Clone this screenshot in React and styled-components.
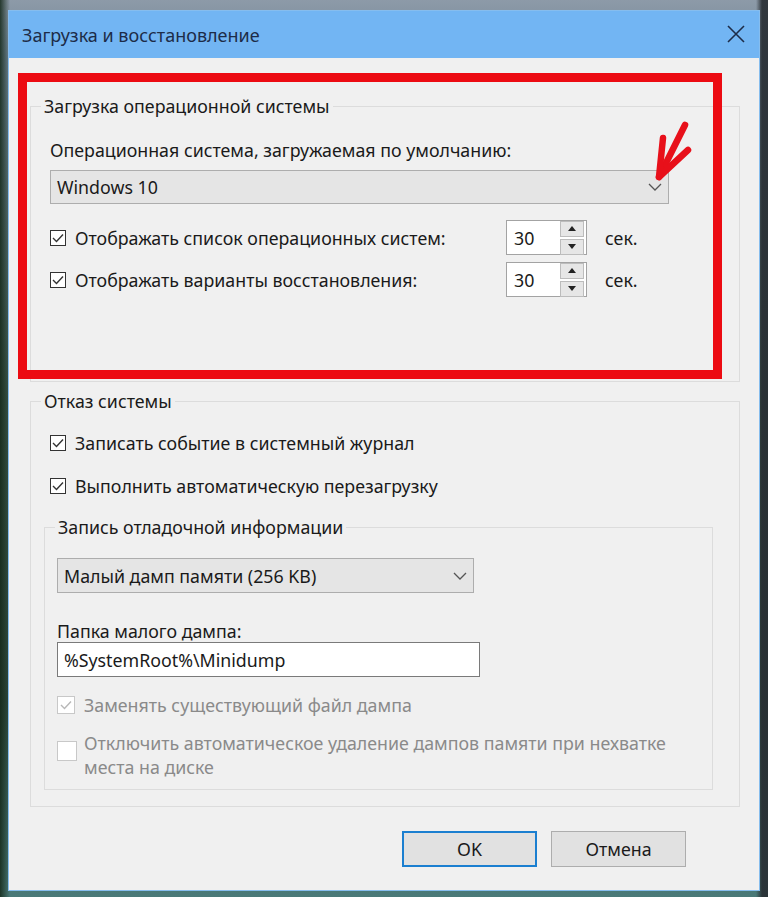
import React from "react";
import styled, { createGlobalStyle } from "styled-components";

const Global = createGlobalStyle`
  html, body { margin: 0; padding: 0; }
  body {
    width: 768px;
    height: 897px;
    overflow: hidden;
    font-family: "Noto Sans", "Open Sans", sans-serif;
    background:
      linear-gradient(90deg, rgba(20,40,25,0.85) 0, rgba(20,40,25,0.0) 10px, rgba(0,0,0,0) 756px, rgba(40,45,50,0.9) 762px),
      linear-gradient(180deg, #8d9aa8 0, #6f8494 60px, #3a5548 400px, #2f4a3e 700px, #4a7a78 897px);
  }
  #root { padding: 10px 0 0 8px; }
`;

const Window = styled.div`
  position: relative;
  width: 752px;
  height: 881px;
  box-sizing: border-box;
  border: 1px solid #86bdee;
  background: #f0f0f0;
  display: flex;
  flex-direction: column;
  color: #1a1a1a;
  font-size: 17.8px;
`;

const TitleBar = styled.div`
  height: 47px;
  background: #72b5f3;
  display: flex;
  align-items: center;
  justify-content: space-between;
  padding: 0 14px 0 13px;
  flex-shrink: 0;
`;

const Title = styled.div`
  font-size: 18px;
  color: #1d2c48;
`;

const CloseIcon = styled.svg`
  width: 18px;
  height: 18px;
  margin-top: -2px;
`;

const Body = styled.div`
  flex: 1;
  display: flex;
  flex-direction: column;
  padding: 38px 19px 0 21px;
`;

const Group = styled.fieldset`
  margin: 0;
  padding: 0;
  border: 1px solid #dcdcdc;
  min-width: 0;
  box-sizing: border-box;
  height: ${(p) => p.$h}px;
  margin-left: ${(p) => p.$ml || 0}px;
  margin-right: ${(p) => p.$mr || 0}px;
  margin-top: ${(p) => p.$mt || 0}px;
`;

const Legend = styled.legend`
  margin-left: 10px;
  padding: 0 3px;
  line-height: 20px;
`;

const Content = styled.div`
  display: flex;
  flex-direction: column;
  padding-left: ${(p) => p.$pl || 0}px;
`;

const Label = styled.div`
  line-height: 20px;
  margin-top: ${(p) => p.$mt || 0}px;
  color: ${(p) => (p.$disabled ? "#8a8a8a" : "#1a1a1a")};
`;

const Select = styled.div`
  box-sizing: border-box;
  width: ${(p) => p.$w}px;
  height: ${(p) => p.$h}px;
  margin-top: ${(p) => p.$mt || 0}px;
  background: #e5e5e5;
  border: 1px solid #adadad;
  display: flex;
  align-items: center;
  justify-content: space-between;
  padding: 0 6px 0 6px;
`;

const Chevron = styled.svg`
  width: 14px;
  height: 8px;
`;

const SpinRow = styled.div`
  display: grid;
  grid-template-columns: 456px 81px auto;
  align-items: center;
  margin-top: ${(p) => p.$mt || 0}px;
`;

const CheckRow = styled.label`
  display: flex;
  align-items: ${(p) => (p.$top ? "flex-start" : "center")};
  gap: ${(p) => p.$gap || 9}px;
  margin-top: ${(p) => p.$mt || 0}px;
  line-height: ${(p) => p.$lh || 20}px;
  color: ${(p) => (p.$disabled ? "#8a8a8a" : "#1a1a1a")};
`;

const Box = styled.span`
  box-sizing: border-box;
  width: ${(p) => p.$size || 16}px;
  height: ${(p) => p.$size || 16}px;
  flex-shrink: 0;
  background: #fff;
  border: 1px solid ${(p) => (p.$disabled ? "#c8c8c8" : "#333")};
  display: flex;
  align-items: center;
  justify-content: center;
  margin-top: ${(p) => p.$mt || 0}px;
`;

const Spinner = styled.div`
  box-sizing: border-box;
  height: 35px;
  width: 81px;
  border: 1px solid #a3a3a3;
  background: #fff;
  display: flex;
  align-items: center;
`;

const SpinValue = styled.div`
  flex: 1;
  padding-left: 7px;
`;

const SpinButtons = styled.div`
  display: flex;
  flex-direction: column;
  gap: 2px;
  padding: 1px 2px 1px 0;
  width: 24px;
`;

const SpinBtn = styled.div`
  height: 14px;
  background: #e6e6e6;
  border: 1px solid #bcbcbc;
  display: flex;
  align-items: center;
  justify-content: center;
`;

const Sec = styled.div`
  margin-left: 18px;
`;

const TextInput = styled.div`
  box-sizing: border-box;
  width: 423px;
  height: 35px;
  background: #fff;
  border: 1px solid #7a7a7a;
  display: flex;
  align-items: center;
  padding-left: 6px;
  margin-top: 1px;
`;

const Footer = styled.div`
  display: flex;
  justify-content: flex-end;
  gap: 14px;
  padding: 24px 54px 0 0;
`;

const Button = styled.div`
  box-sizing: border-box;
  width: 135px;
  height: 36px;
  display: flex;
  align-items: center;
  justify-content: center;
  background: #e1e1e1;
  border: ${(p) => (p.$primary ? "2px solid #1b7fd0" : "1px solid #adadad")};
`;

const RedFrame = styled.div`
  position: absolute;
  left: 9px;
  top: 62px;
  width: 704px;
  height: 306px;
  box-sizing: border-box;
  border: 9px solid #ec0b12;
  pointer-events: none;
`;

const Arrow = styled.svg`
  position: absolute;
  left: 621px;
  top: 94px;
  width: 100px;
  height: 100px;
  pointer-events: none;
`;

const Check = ({ color = "#333" }) => (
  <svg width="12" height="10" viewBox="0 0 12 10">
    <path d="M1 5 L4.5 8.5 L11 1.5" fill="none" stroke={color} strokeWidth="1.4" />
  </svg>
);

const ChevronDown = () => (
  <Chevron viewBox="0 0 14 8">
    <path d="M1 1 L7 7 L13 1" fill="none" stroke="#555" strokeWidth="1.3" />
  </Chevron>
);

const Tri = ({ up }) => (
  <svg width="8" height="5" viewBox="0 0 8 5">
    <path d={up ? "M0 5 L4 0 L8 5 Z" : "M0 0 L4 5 L8 0 Z"} fill="#222" />
  </svg>
);

const SpinBox = ({ value }) => (
  <Spinner>
    <SpinValue>{value}</SpinValue>
    <SpinButtons>
      <SpinBtn><Tri up /></SpinBtn>
      <SpinBtn><Tri /></SpinBtn>
    </SpinButtons>
  </Spinner>
);

export default function App() {
  return (
    <>
      <Global />
      <Window>
        <TitleBar>
          <Title>Загрузка и восстановление</Title>
          <CloseIcon viewBox="0 0 18 18">
            <path d="M1 1 L17 17 M17 1 L1 17" stroke="#1d2c48" strokeWidth="1.6" />
          </CloseIcon>
        </TitleBar>
        <Body>
          <Group $h={286}>
            <Legend>Загрузка операционной системы</Legend>
            <Content $pl={19}>
              <Label $mt={24}>Операционная система, загружаемая по умолчанию:</Label>
              <Select $w={619} $h={34} $mt={10}>
                <span>Windows 10</span>
                <ChevronDown />
              </Select>
              <SpinRow $mt={16}>
                <CheckRow>
                  <Box><Check /></Box>
                  Отображать список операционных систем:
                </CheckRow>
                <SpinBox value="30" />
                <Sec>сек.</Sec>
              </SpinRow>
              <SpinRow $mt={7}>
                <CheckRow>
                  <Box><Check /></Box>
                  Отображать варианты восстановления:
                </CheckRow>
                <SpinBox value="30" />
                <Sec>сек.</Sec>
              </SpinRow>
            </Content>
          </Group>
          <Group $h={416} $mt={9}>
            <Legend>Отказ системы</Legend>
            <Content $pl={19}>
              <CheckRow $mt={22}>
                <Box><Check /></Box>
                Записать событие в системный журнал
              </CheckRow>
              <CheckRow $mt={23}>
                <Box><Check /></Box>
                Выполнить автоматическую перезагрузку
              </CheckRow>
            </Content>
            <Group $h={273} $ml={13} $mr={26} $mt={21}>
              <Legend>Запись отладочной информации</Legend>
              <Content $pl={12}>
                <Select $w={417} $h={35} $mt={21}>
                  <span>Малый дамп памяти (256 KB)</span>
                  <ChevronDown />
                </Select>
                <Label $mt={28}>Папка малого дампа:</Label>
                <TextInput>%SystemRoot%\Minidump</TextInput>
                <CheckRow $mt={18} $disabled>
                  <Box $size={18} $disabled><Check color="#b8b8b8" /></Box>
                  Заменять существующий файл дампа
                </CheckRow>
                <CheckRow $mt={16} $top $lh={24} $gap={7}>
                  <Box $size={20} $disabled $mt={10} />
                  <Label $disabled as="span" style={{ lineHeight: "24px" }}>
                    Отключить автоматическое удаление дампов памяти при нехватке<br />места на диске
                  </Label>
                </CheckRow>
              </Content>
            </Group>
          </Group>
          <Footer>
            <Button $primary>OK</Button>
            <Button>Отмена</Button>
          </Footer>
        </Body>
        <RedFrame />
        <Arrow viewBox="0 0 100 100">
          <g stroke="#e8101a" strokeWidth="6.5" strokeLinecap="round" strokeLinejoin="round" fill="none">
            <path d="M55 20 L29 72" />
            <path d="M33 33 L29 72 L58 45" />
          </g>
        </Arrow>
      </Window>
    </>
  );
}
